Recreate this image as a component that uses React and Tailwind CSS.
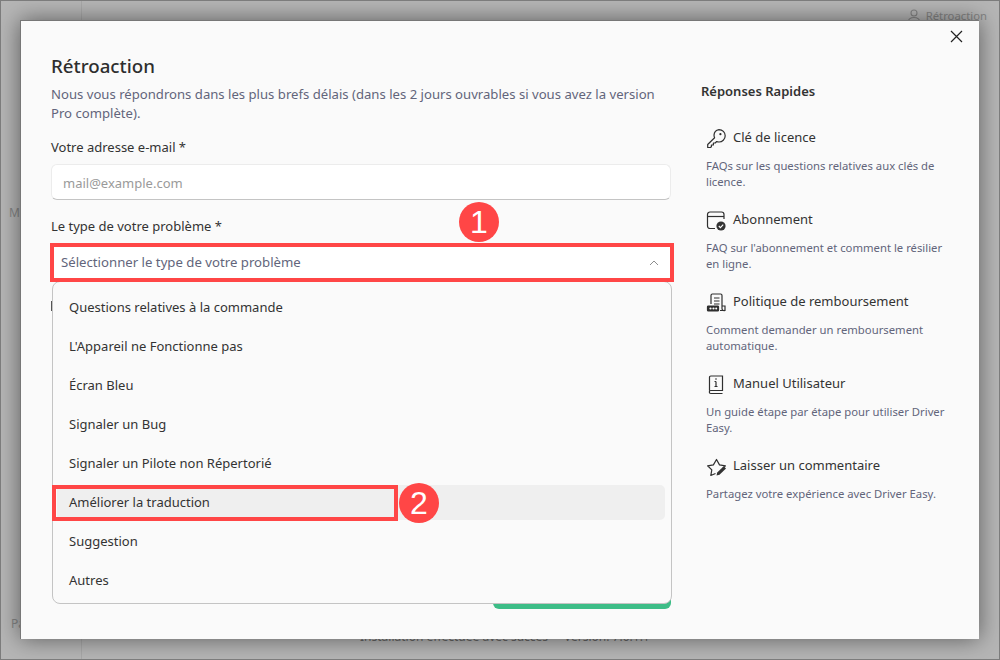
const FONT = "font-['Noto_Sans','Open_Sans',sans-serif]";

function KeyIcon() {
  return (
    <svg width="21" height="21" viewBox="0 0 21 21" fill="none" stroke="#2f2f2f" strokeWidth="1.2" strokeLinejoin="round" strokeLinecap="round">
      <path d="M13 1.6a6.2 6.2 0 0 1 6.2 6.2c0 3.6-3 6.3-6.3 6.2-.8 0-1.6-.2-2.2-.5L9.2 15H7.4v2H5.4v1.7l-1 .8H1.700v-3l6.900-6.800a6 6 0 0 1-.6-2.600A6 6 0 0 1 13 1.6Z" />
      <circle cx="14.4" cy="6.2" r="1.1" fill="#2f2f2f" stroke="none" />
    </svg>
  );
}
function SubIcon() {
  return (
    <svg width="21" height="21" viewBox="0 0 21 21" fill="none">
      <path d="M9 18.5H4a2.5 2.5 0 0 1-2.5-2.5V4.5A2.5 2.5 0 0 1 4 2h11.5A2.5 2.5 0 0 1 18 4.5V9" stroke="#2f2f2f" strokeWidth="1.2" />
      <path d="M1.5 6.5H18" stroke="#2f2f2f" strokeWidth="1.2" />
      <circle cx="15" cy="16" r="4.6" fill="#333" />
      <path d="M12.8 16l1.6 1.6 2.8-3" stroke="#fff" strokeWidth="1.1" />
    </svg>
  );
}
function RefundIcon() {
  return (
    <svg width="21" height="21" viewBox="0 0 21 21" fill="none" stroke="#2f2f2f" strokeWidth="1.2">
      <path d="M5 12V3.4A1.4 1.4 0 0 1 6.4 2h8.2A1.4 1.4 0 0 1 16 3.4V16.5a2 2 0 0 0 2.8 1.9" />
      <path d="M8 6h5.5M8 9h5.5M8 12h5.5" />
      <path d="M14 18.5h5v-4.500h-3" />
      <rect x="1.500" y="14" width="11" height="5" rx=".8" fill="#2f2f2f" />
      <circle cx="4.500" cy="16.500" r="1.100" fill="#fff" stroke="none" />
      <circle cx="7.500" cy="16.500" r="1.100" fill="#fff" stroke="none" />
      <circle cx="10.200" cy="16.500" r="1" fill="#fff" stroke="none" />
    </svg>
  );
}
function BookIcon() {
  return (
    <svg width="21" height="21" viewBox="0 0 21 21" fill="none" stroke="#2f2f2f" strokeWidth="1.2">
      <path d="M3.500 16.500V3.300A1.300 1.300 0 0 1 4.800 2h11.700v14.500H4.800a1.500 1.500 0 0 0 0 3h11.700" />
      <path d="M10 7.500V12.500M8.500 7.500H10M8.500 12.500h3" />
      <circle cx="10" cy="5" r=".8" fill="#2f2f2f" stroke="none" />
    </svg>
  );
}
function StarIcon() {
  return (
    <svg width="22" height="21" viewBox="0 0 22 21" fill="none">
      <path d="M9.500 17.500l-4.700 2 1-5.600L1.600 9.800l5.800-.9L10.500 3.500l3 5.400 5.900.9-2.700 2.700" stroke="#2f2f2f" strokeWidth="1.2" strokeLinejoin="round" />
      <path d="M10.500 19.500l.7-3 6.500-6.300 2.300 2.300-6.500 6.300Z" fill="#333" />
    </svg>
  );
}

const QUICK = [
  { icon: <KeyIcon />, title: "Clé de licence", lines: ["FAQs sur les questions relatives aux clés de", "licence."] },
  { icon: <SubIcon />, title: "Abonnement", lines: ["FAQ sur l'abonnement et comment le résilier", "en ligne."] },
  { icon: <RefundIcon />, title: "Politique de remboursement", lines: ["Comment demander un remboursement", "automatique."] },
  { icon: <BookIcon />, title: "Manuel Utilisateur", lines: ["Un guide étape par étape pour utiliser Driver", "Easy."] },
  { icon: <StarIcon />, title: "Laisser un commentaire", lines: ["Partagez votre expérience avec Driver Easy."] },
];

const OPTIONS = [
  "Questions relatives à la commande",
  "L'Appareil ne Fonctionne pas",
  "Écran Bleu",
  "Signaler un Bug",
  "Signaler un Pilote non Répertorié",
  "Améliorer la traduction",
  "Suggestion",
  "Autres",
];

function Badge({ n, className }) {
  return (
    <div className={"absolute w-10 h-10 rounded-full bg-[#ff4646] text-white flex items-center justify-center text-[32px] font-['Liberation_Sans',sans-serif] leading-none " + className}>
      {n}
    </div>
  );
}

export default function App() {
  return (
    <div className={"relative w-[1000px] h-[660px] overflow-hidden bg-[#b6b6b6] border border-[#7c7c7c] flex " + FONT}>
      <div className="w-[81px] shrink-0 border-r border-[#a9a9a9] flex flex-col text-[12px] text-[#858585]">
        <div className="pt-[203px] pl-[8px] leading-[18px]">M</div>
        <div className="mt-auto pb-[26px] pl-[10px] leading-[18px]">Pa</div>
      </div>
      <div className="flex-1 flex flex-col">
        <div className="flex justify-end items-center gap-[3px] pr-[12px] pt-[6px] text-[11.3px] leading-[18px] text-[#858585]">
          <svg className="-translate-x-px" width="16" height="16" viewBox="0 0 16 16" fill="none" stroke="#858585" strokeWidth="1.1">
            <circle cx="8" cy="5" r="3" />
            <path d="M2 14c.5-3 3-4.500 6-4.500s5.500 1.500 6 4.500Z" />
          </svg>
          <span>Rétroaction</span>
        </div>
        <div className="mt-auto pl-[278px] pb-[13px] flex gap-[16px] text-[12px] leading-[18px] text-[#666]">
          <span>Installation effectuée avec succès</span>
          <span>Version: 7.0.1.1</span>
        </div>
      </div>

      <div className="absolute left-[19px] top-[19px] w-[959px] h-[619px] bg-[#fafafa] border-l border-t border-[#777] shadow-[0_0_22px_rgba(0,0,0,0.5)] flex pl-[30px] pt-[31px] pb-[30px]">
        <div className="relative w-[620px] shrink-0 flex flex-col">
          <h1 className="text-[18.7px] leading-[28px] font-medium text-[#2e2e2e]">Rétroaction</h1>
          <p className="mt-[5px] text-[13.13px] leading-[19px] text-[#62657b] whitespace-nowrap">
            Nous vous répondrons dans les plus brefs délais (dans les 2 jours ouvrables si vous avez la version
            <br />
            Pro complète).
          </p>
          <label className="mt-[14px] text-[13px] leading-[20px] text-[#333]">Votre adresse e-mail *</label>
          <div className="mt-[7px] h-[36px] rounded-[6px] bg-white border border-[#ececec] border-b-[#c4c4c4] flex items-center px-[11px] pt-[4px] text-[13px] text-[#9a9a9a]">
            mail@example.com
          </div>
          <label className="mt-[16px] text-[13px] leading-[20px] text-[#333]">Le type de votre problème *</label>
          <div className="mt-[8px] h-[36px] rounded-[6px] bg-white flex items-center justify-between pl-[10px] pr-[12px] pt-[2px] text-[13.2px] text-[#62657b]">
            <span>Sélectionner le type de votre problème</span>
            <svg width="10" height="6" viewBox="0 0 10 6" fill="none" stroke="#8e8e8e" strokeWidth="1">
              <path d="M1 5l4-4 4 4" />
            </svg>
          </div>
          <div className="mt-[21px] w-[2px] h-[10px] bg-[#555]" />
          <div className="mt-auto self-end w-[178px] h-[36px] rounded-[6px] bg-[#3dbd87]" />

          <div className="absolute left-[1px] top-[229px] w-[620px] h-[323px] rounded-[8px] bg-[#fafafa] border border-[#c4c4c4] pt-[8px] pl-[4px] pr-[6px] flex flex-col gap-[4px]">
            {OPTIONS.map((o, i) => (
              <div key={o} className={"h-[35px] shrink-0 rounded-[5px] flex items-center pl-[12px] text-[13px] text-[#333] " + (i === 5 ? "bg-[#efefef]" : "")}>
                {o}
              </div>
            ))}
          </div>

          <div className="absolute left-[-1px] top-[191px] w-[624px] h-[39px] border-4 border-[#ff4646]" />
          <div className="absolute left-[1px] top-[433px] w-[346px] h-[36px] border-4 border-[#ff4646]" />
          <Badge n="1" className="left-[408px] top-[150px]" />
          <Badge n="2" className="left-[348px] top-[431px]" />
        </div>

        <div className="ml-[30px] w-[250px] flex flex-col">
          <h2 className="mt-[29px] text-[13px] leading-[20px] font-semibold text-[#333]">Réponses Rapides</h2>
          <div className="mt-[24px] pl-[5px] flex flex-col">
            {QUICK.map((q) => (
              <div key={q.title} className="h-[82px] shrink-0">
                <div className="h-[26px] flex items-center gap-[6px]">
                  <span className="w-[21px] h-[21px] shrink-0">{q.icon}</span>
                  <span className="text-[13px] text-[#333]">{q.title}</span>
                </div>
                <div className="mt-[7px] text-[11.3px] leading-[16px] text-[#62657b] whitespace-nowrap">
                  {q.lines.map((l) => (
                    <div key={l}>{l}</div>
                  ))}
                </div>
              </div>
            ))}
          </div>
        </div>

        <svg className="absolute right-[16px] top-[9px]" width="13" height="13" viewBox="0 0 13 13" fill="none" stroke="#222" strokeWidth="1.200">
          <path d="M1 1l11 11M12 1L1 12" />
        </svg>
      </div>
    </div>
  );
}
